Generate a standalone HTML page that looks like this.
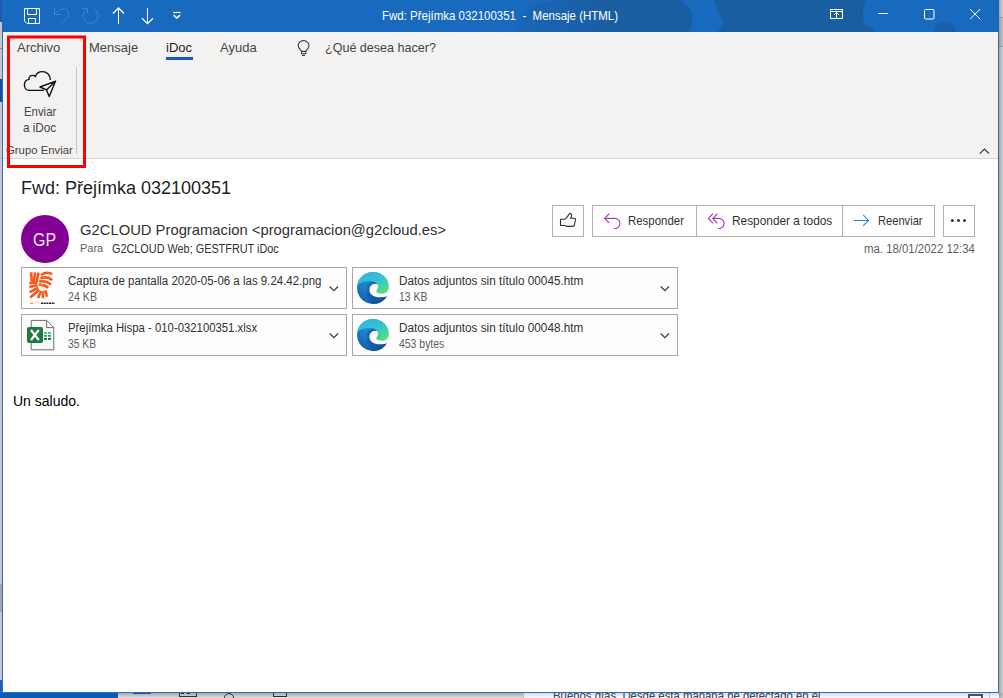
<!DOCTYPE html>
<html><head><meta charset="utf-8">
<style>
*{margin:0;padding:0;box-sizing:border-box}
html,body{width:1003px;height:698px;overflow:hidden;background:#d0cecc;font-family:"Liberation Sans",sans-serif;position:relative}
.a{position:absolute;white-space:nowrap;transform-origin:0 0}
.tab{top:40px;font-size:13px;color:#444;line-height:16px}
.tt{color:#fff;font-size:13px;line-height:16px}
.btn{border:1px solid #b3b0ad;background:#fff}
.att{border:1px solid #a8a8a8;background:#fdfdfd;height:42px}
.an{font-size:12px;color:#323130;line-height:15px}
.as{font-size:12px;color:#605e5c;line-height:15px}
.bt{font-size:13px;color:#323130;line-height:16px}
svg{position:absolute;left:0;top:0}
</style></head><body>
<!-- outside background -->
<div class="a" style="left:0;top:0;width:2px;height:698px;background:#c9c7c5"></div>
<div class="a" style="left:0;top:0;width:2px;height:22px;background:#1e5bb0"></div>
<div class="a" style="left:0;top:79px;width:2px;height:23px;background:#0f4c9a"></div>
<div class="a" style="left:0;top:48px;width:2px;height:1px;background:#8a8886"></div>
<div class="a" style="left:0;top:584px;width:2px;height:28px;background:#a9a7a5"></div>
<div class="a" style="left:0;top:680px;width:2px;height:18px;background:#1565c0"></div>
<div class="a" style="left:0;top:693px;width:118px;height:5px;background:#0d5bb8"></div>
<div class="a" style="left:118px;top:693px;width:406px;height:5px;background:linear-gradient(#c4c0bc,#e2e0de)"></div>
<div class="a" style="left:133px;top:693px;width:18px;height:1px;background:#185abd"></div>
<div class="a" style="left:179px;top:690px;width:18px;height:7px;border:1px solid #333;border-top:0"></div>
<div class="a" style="left:181px;top:693px;width:9px;height:1px;border-top:1px dashed #333"></div>
<div class="a" style="left:224px;top:693px;width:10px;height:10px;border:1px solid #333;border-radius:50%"></div>
<div class="a" style="left:273px;top:690px;width:14px;height:7px;border:1px solid #333;border-top:0"></div>
<div class="a" style="left:524px;top:693px;width:479px;height:5px;background:#fafafa"></div>
<div class="a" style="left:999px;top:0;width:4px;height:698px;background:linear-gradient(90deg,#a8a6a4,#d4d2d0)"></div>
<div class="a" style="left:999px;top:17px;width:4px;height:30px;background:rgba(0,0,0,.06);border-top:1px solid rgba(0,0,0,.15);border-bottom:1px solid rgba(0,0,0,.15)"></div>
<!-- window -->
<div class="a" style="left:2px;top:0;width:997px;height:693px;background:#fff;border:1px solid #2b6fc4;border-top:0"></div>
<!-- title bar -->
<div class="a" style="left:2px;top:0;width:997px;height:32px;background:#186abe;overflow:hidden"></div>
<svg width="1003" height="32" viewBox="0 0 1003 32" style="left:0;top:0">
 <defs><linearGradient id="tg" gradientUnits="userSpaceOnUse" x1="518" y1="0" x2="610" y2="0"><stop offset="0" stop-color="#1a65b6"/><stop offset="1" stop-color="#1a5ea2"/></linearGradient></defs>
 <path d="M518 32 C518 15 530 2 546 2 C552 2 556 0 560 0 H680 C688 5 693 12 692.5 18 C692 25 690 29 689 32 Z" fill="url(#tg)"/>
 <path d="M714 0 C716 8 720 16 724.5 22.5 C722 26 719.5 29 718 32 H874 C874 29 871 26.5 867 26 C862 22 861 12 866 0 Z" fill="#1a5ea2"/>
 <path d="M934 32 C934 26 939 22 945 22 C951 22 956 27 956 32 Z" fill="#1a5fac"/>
</svg>
<div class="a tt" style="left:382px;top:8px;transform:scaleX(0.883)">Fwd: Přejímka 032100351&nbsp;&nbsp;-&nbsp;&nbsp;Mensaje (HTML)</div>
<!-- ribbon -->
<div class="a" style="left:3px;top:32px;width:995px;height:127px;background:#f3f2f1;border-bottom:1px solid #d6d4d2"></div>
<div class="a tab" style="left:17px">Archivo</div>
<div class="a tab" style="left:89px">Mensaje</div>
<div class="a tab" style="left:166px;color:#252423">iDoc</div>
<div class="a" style="left:166px;top:57px;width:27px;height:3px;background:#185abd"></div>
<div class="a tab" style="left:220px">Ayuda</div>
<div class="a tab" style="left:325px;transform:scaleX(0.965)">¿Qué desea hacer?</div>
<div class="a" style="left:76px;top:67px;width:1px;height:87px;background:#c8c6c4"></div>
<div class="a bt" style="left:24px;top:104px;color:#444;transform:scaleX(0.875)">Enviar</div>
<div class="a bt" style="left:23px;top:120px;color:#444;transform:scaleX(0.9)">a iDoc</div>
<div class="a" style="left:6px;top:144px;font-size:11px;color:#444;transform:scaleX(1.03)">Grupo Enviar</div>
<!-- content -->
<div class="a" style="left:21px;top:178px;font-size:18px;color:#201f1e">Fwd: Přejímka 032100351</div>
<div class="a" style="left:21px;top:215px;width:48px;height:48px;border-radius:50%;background:#830094"></div>
<div class="a" style="left:33px;top:230px;font-size:17.5px;line-height:20px;color:rgba(255,255,255,.93);transform:scaleX(0.91)">GP</div>
<div class="a" style="left:80px;top:221px;font-size:15px;color:#323130;transform:scaleX(0.986)">G2CLOUD Programacion &lt;programacion@g2cloud.es&gt;</div>
<div class="a" style="left:80px;top:242px;font-size:11px;color:#605e5c">Para</div>
<div class="a" style="left:112px;top:242px;font-size:12px;color:#323130;transform:scaleX(0.905)">G2CLOUD Web; GESTFRUT iDoc</div>
<!-- buttons -->
<div class="a btn" style="left:552px;top:205px;width:32px;height:32px"></div>
<div class="a btn" style="left:592px;top:205px;width:343px;height:32px"></div>
<div class="a" style="left:696px;top:205px;width:1px;height:32px;background:#b3b0ad"></div>
<div class="a" style="left:842px;top:205px;width:1px;height:32px;background:#b3b0ad"></div>
<div class="a btn" style="left:943px;top:205px;width:32px;height:32px"></div>
<div class="a bt" style="left:628px;top:213px;transform:scaleX(0.88)">Responder</div>
<div class="a bt" style="left:732px;top:213px;transform:scaleX(0.913)">Responder a todos</div>
<div class="a bt" style="left:878px;top:213px;transform:scaleX(0.856)">Reenviar</div>
<div class="a" style="left:864px;top:242px;font-size:12px;color:#605e5c;transform:scaleX(0.95)">ma. 18/01/2022 12:34</div>
<!-- attachments -->
<div class="a att" style="left:21px;top:267px;width:326px"></div>
<div class="a att" style="left:352px;top:267px;width:326px"></div>
<div class="a att" style="left:21px;top:314px;width:326px"></div>
<div class="a att" style="left:352px;top:314px;width:326px"></div>
<div class="a an" style="left:68px;top:274px;transform:scaleX(0.957)">Captura de pantalla 2020-05-06 a las 9.24.42.png</div>
<div class="a as" style="left:68px;top:290px;transform:scaleX(0.89)">24 KB</div>
<div class="a an" style="left:68px;top:321px;transform:scaleX(0.945)">Přejímka Hispa - 010-032100351.xlsx</div>
<div class="a as" style="left:68px;top:337px;transform:scaleX(0.86)">35 KB</div>
<div class="a an" style="left:399px;top:274px;transform:scaleX(0.98)">Datos adjuntos sin título 00045.htm</div>
<div class="a as" style="left:399px;top:290px;transform:scaleX(0.87)">13 KB</div>
<div class="a an" style="left:399px;top:321px;transform:scaleX(0.98)">Datos adjuntos sin título 00048.htm</div>
<div class="a as" style="left:399px;top:337px;transform:scaleX(0.87)">453 bytes</div>
<!-- body -->
<div class="a" style="left:13px;top:393px;font-size:14px;color:#000">Un saludo.</div>
<!-- background clipped text -->
<div class="a" style="left:523px;top:693px;width:1px;height:5px;background:#c8c6c4"></div>
<div class="a" style="left:553px;top:688px;font-size:13px;color:#444;height:10px;overflow:hidden;clip-path:inset(5px 0 0 0);transform:scaleX(0.873)">Buenos días&nbsp; Desde esta mañana he detectado en el</div>
<div class="a" style="left:968px;top:694px;width:15px;height:8px;border:2px solid #555"></div>
<div class="a" style="left:989px;top:693px;width:1px;height:5px;background:#ccc"></div>
<div class="a" style="left:118px;top:693px;width:885px;height:5px;background:linear-gradient(rgba(0,0,0,.12),rgba(0,0,0,0))"></div>

<!-- ICONS -->
<svg width="1003" height="698" viewBox="0 0 1003 698">
 <defs>
  <linearGradient id="eb" x1="0" y1="1" x2="0.6" y2="0"><stop offset="0" stop-color="#0c59a4"/><stop offset="1" stop-color="#2fa3e8"/></linearGradient>
  <linearGradient id="eg" x1="0" y1="0" x2="1" y2="1"><stop offset="0" stop-color="#2cb0ee"/><stop offset=".55" stop-color="#35c5c9"/><stop offset="1" stop-color="#62e56a"/></linearGradient>
  <linearGradient id="ed" x1="0" y1="0" x2="1" y2="1"><stop offset="0" stop-color="#1a6fc4"/><stop offset="1" stop-color="#114a8b"/></linearGradient>
  <symbol id="edge" viewBox="0 0 32 32">
   <circle cx="16" cy="16" r="15.9" fill="url(#eb)"/>
   <path d="M9.5 16.5 C9.5 12 12.5 9.8 15.5 9.8 C19 9.8 21 12 21 14.5 L21 20 L30.5 23.5 A16 16 0 0 1 16 31.9 C12 31.9 9.5 25 9.5 16.5 Z" fill="url(#ed)"/>
   <path d="M12.5 18 C12.5 14.5 14.8 12 17.5 12 L32.5 12 L32.5 16 A16 16 0 0 1 30.3 24.3 C27.5 25.3 24.5 25.4 21.5 25.2 C16.5 25 12.5 22.2 12.5 18 Z" fill="#fff"/>
   <path d="M0.2 13 C1.5 5.5 8 0.1 16 0.1 C25 0.1 31.9 7 31.9 14.5 C31.9 19 29 21.8 25.5 21.8 C22 21.8 19.3 20.8 19.3 19.5 C19.3 18 21 17 21 14.8 C21 11.5 17.8 9 14 9 C8.5 9 3 10.5 0.2 13 Z" fill="url(#eg)"/>
  </symbol>
 </defs>
 <!-- title bar icons -->
 <g fill="none" stroke="#fff" stroke-width="1">
  <path d="M24.5 8.5 H39.5 V23.5 H27 L24.5 21 Z"/>
  <path d="M27.5 8.5 V14.5 H36.5 V8.5"/>
  <path d="M28.5 23.5 V18.5 H35.5 V23.5"/>
  <path d="M113 13.5 L118.5 8 L124 13.5" stroke-width="1.3"/><path d="M118.5 8.5 V24"/>
  <path d="M142 18.3 L147.5 23.7 L153 18.3" stroke-width="1.3"/><path d="M147.5 8 V23.3"/>
  <path d="M173 12.5 H180.5" stroke-width="1.2"/>
  <path d="M173.6 15.2 L176.8 18 L180 15.2" stroke-width="1.6"/>
  <path d="M830.5 9.5 H842.5 V18.5 H830.5 Z M830.5 11.5 H842.5 M836.5 18.5 V12.8 M834 15 L836.5 12.5 L839 15"/>
  <path d="M878 13.5 H888"/>
  <rect x="924.5" y="9.5" width="9.5" height="9.5" rx="1"/>
  <path d="M970 9 L980.2 19.2 M980.2 9 L970 19.2"/>
 </g>
 <g fill="none" stroke="#3d86d8" stroke-width="1">
  <path d="M54.5 8 V14.5 H61"/>
  <path d="M55 14 C58 9.5 63 8 66 9.5 C69 11 69.5 15 67 18 L60.5 24"/>
  <path d="M82 8.5 H87.5 V13.7"/>
  <path d="M87 9.2 A7.5 7.5 0 1 0 94.5 9.5"/>
 </g>
 <!-- ribbon icons -->
 <g fill="none" stroke="#3b3a39" stroke-width="1.1">
  <path d="M303.5 40.6 C300.4 40.6 298.2 43 298.2 45.8 C298.2 47.9 300 49.2 301.5 51 V53.8 H305.8 V51 C307.3 49.2 309 47.9 309 45.8 C309 43 306.6 40.6 303.5 40.6 Z M301.5 51.4 H305.8"/>
  <path d="M302 55.5 H305"/>
 </g>
 <g fill="none" stroke="#111" stroke-width="1.4" stroke-linejoin="round">
  <path d="M43.9 90.4 H29 C26.3 90.4 24.4 88 24.4 85 C24.4 82 26.5 79.8 29 79.4 C29 77 30.5 75.4 32.3 75.4 C33.6 75.4 34.8 76 35.3 76.6 C36.3 73.5 39 71.6 42.4 71.6 C46.6 71.6 50.3 74.8 50.4 80.1"/>
  <path d="M55.6 81.1 L40 87 L46.5 89.9 L49.2 96.4 Z M46.5 89.9 L55.6 81.1"/>
 </g>
 <path d="M979.8 153.6 L984.4 149 L989 153.6" fill="none" stroke="#323130" stroke-width="1.2"/>
 <!-- buttons icons -->
 <path d="M560.5 219.2 V225.5 H565.1 L566.7 226.4 H572.9 C573.8 226.4 574.2 225.8 574.4 225 L575.5 219.5 C575.6 218.6 575.2 218.2 574.4 218.2 H570.6 C571.6 216.5 571.8 214.2 570.8 213.5 C570.3 213.1 569.8 213.3 569.5 213.7 L566 218.3 C565.5 218.9 565 219.2 564.2 219.2 Z" fill="#fafafa" stroke="#323130" stroke-width="1.1" stroke-linejoin="round"/>
 <g fill="none" stroke="#a33ab5" stroke-width="1.1" stroke-linecap="round">
  <path d="M608.9 214 L604.7 218.4 L608.9 222.7 M604.9 218.4 H614.9 A5 5 0 0 1 614.9 228.5 H614.5"/>
  <path d="M712.7 214 L708.4 218.4 L712.7 222.9 M717 214 L712.7 218.4 L717 222.9 M712.9 218.4 H719 A5 5 0 0 1 719 228.5 H718.5"/>
 </g>
 <path d="M854.1 220.5 H868.5 M863.5 215.4 L868.6 220.4 L863.5 225.3" fill="none" stroke="#2b86d6" stroke-width="1.1" stroke-linecap="round"/>
 <g fill="#323130"><circle cx="952.4" cy="220.5" r="1.5"/><circle cx="958.5" cy="220.5" r="1.5"/><circle cx="964.5" cy="220.5" r="1.5"/></g>
 <!-- attachment chevrons -->
 <g fill="none" stroke="#3b3a39" stroke-width="1.2">
  <path d="M329.7 286.5 L333.9 290.6 L338 286.5"/>
  <path d="M660.7 286.5 L664.9 290.6 L669 286.5"/>
  <path d="M329.7 333.5 L333.9 337.6 L338 333.5"/>
  <path d="M660.7 333.5 L664.9 337.6 L669 333.5"/>
 </g>
 <!-- edge icons -->
 <use href="#edge" x="357" y="272" width="32" height="32"/>
 <use href="#edge" x="357" y="319" width="32" height="32"/>
 <!-- excel icon -->
 <g>
  <path d="M31.2 320.4 H46.6 L53.8 327.6 V349.8 H31.2 Z" fill="#fafafa" stroke="#6e6d6c" stroke-width="1"/>
  <path d="M46.6 320.4 V327.6 H53.8" fill="none" stroke="#6e6d6c" stroke-width="1"/>
  <rect x="44" y="332" width="3" height="1.8" fill="#33c481"/><rect x="48" y="332" width="3" height="1.8" fill="#33c481"/>
  <rect x="44" y="335" width="3" height="1.8" fill="#21a366"/><rect x="48" y="335" width="3" height="1.8" fill="#21a366"/>
  <rect x="44" y="338" width="3" height="1.8" fill="#185c37"/><rect x="48" y="338" width="3" height="1.8" fill="#185c37"/>
  <rect x="27" y="327" width="16" height="16" rx="2" fill="#1d7a45"/>
  <path d="M31 330 L38.8 340 M38.8 330 L31 340" stroke="#fff" stroke-width="2.2"/>
 </g>
 <!-- orange logo -->
 <svg x="26" y="270" width="32" height="36" viewBox="0 0 620 698">
  <g fill="none" stroke="#f85a16" stroke-width="50" stroke-linecap="butt">
   <path d="M100 45 C102 110 108 170 112 225"/>
   <path d="M175 45 C170 110 160 170 150 235"/>
   <path d="M240 50 C230 120 215 180 200 245"/>
   <path d="M290 95 C360 50 450 45 505 80"/>
   <path d="M275 160 C360 130 450 145 510 195"/>
   <path d="M255 225 C340 205 430 230 485 285"/>
   <path d="M245 285 C320 280 385 305 430 345"/>
   <path d="M65 255 C120 245 170 245 215 255"/>
   <path d="M65 330 C120 315 170 300 225 295"/>
   <path d="M70 430 C130 400 180 370 235 340"/>
   <path d="M80 535 C140 490 200 430 255 380"/>
   <path d="M235 545 C255 490 275 445 290 405"/>
   <path d="M325 545 C330 500 333 460 332 410"/>
   <path d="M400 520 C400 480 392 440 375 395"/>
  </g>
  <g fill="none" stroke="#fbb896" stroke-width="10">
   <path d="M215 255 C240 230 270 200 290 95"/>
   <path d="M225 295 C260 280 300 270 350 280"/>
   <path d="M235 340 C270 330 320 340 360 380"/>
  </g>
  <path d="M80 645 H140" stroke="#f85a16" stroke-width="18"/>
  <path d="M180 650 C190 610 250 610 265 650" fill="none" stroke="#fbb08a" stroke-width="16"/>
  <path d="M290 645 H560" stroke="#222" stroke-width="28" stroke-dasharray="40 12"/>
 </svg>
 <!-- red annotation -->
 <rect x="8.5" y="37" width="76" height="129.5" fill="none" stroke="#ff0000" stroke-width="3"/>
</svg>
</body></html>
